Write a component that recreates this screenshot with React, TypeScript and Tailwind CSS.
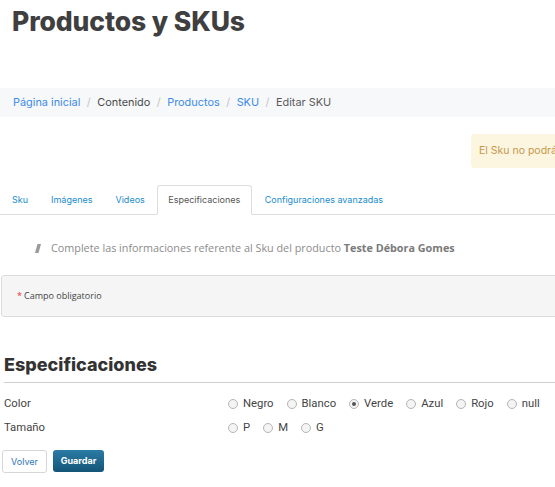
import React from "react";

const colors = ["Negro", "Blanco", "Verde", "Azul", "Rojo", "null"];
const sizes = ["P", "M", "G"];

function Radio({ label, checked }: { label: string; checked?: boolean }) {
    return (
        <label className="mr-[13px] flex items-center gap-[5px]">
            <span className="flex h-[10px] w-[10px] items-center justify-center rounded-full border border-[#b5b5b5] bg-[#f4f4f4]">
                {checked && <span className="h-[4px] w-[4px] rounded-full bg-[#555]" />}
            </span>
            <span>{label}</span>
        </label>
    );
}

export default function App() {
    return (
        <div className="relative h-[487px] w-[555px] overflow-hidden bg-white font-['Open_Sans',sans-serif] text-[#444]">
            {/* Title */}
            <h1 className="pl-[12px] pt-[5px] font-['Inter',sans-serif] text-[26.5px] leading-[32px] font-extrabold tracking-[-0.1px] text-[#3f3f40]">
                Productos y SKUs
            </h1>

            {/* Breadcrumb */}
            <div className="mt-[51px] flex h-[29px] items-center bg-[#f7f8fa] px-[13px] font-['Inter',sans-serif] text-[10.9px] text-[#4a4a4a]">
                <a className="text-[#3b8be6]">Página inicial</a>
                <span className="mx-[6.5px] text-[#c4c4c4]">/</span>
                <span>Contenido</span>
                <span className="mx-[6.5px] text-[#c4c4c4]">/</span>
                <a className="text-[#3b8be6]">Productos</a>
                <span className="mx-[6.5px] text-[#c4c4c4]">/</span>
                <a className="text-[#3b8be6]">SKU</a>
                <span className="mx-[6.5px] text-[#c4c4c4]">/</span>
                <span className="text-[#5a5a5a]">Editar SKU</span>
            </div>

            {/* Alert */}
            <div className="mt-[17px] flex">
                <div className="ml-[471px] flex h-[34px] w-[240px] shrink-0 items-center whitespace-nowrap rounded-[4px] bg-[#fcf5e0] pl-[8px] font-['Inter',sans-serif] text-[10.5px] text-[#c4994c]">
                    El Sku no podrá ser modificado
                </div>
            </div>

            {/* Tabs */}
            <div className="mt-[17px] flex h-[30px] items-end border-b border-[#ddd] font-['Inter',sans-serif] text-[9px] text-[#1a8dcd]">
                <a className="flex h-[29px] items-center px-[12px]">Sku</a>
                <a className="flex h-[29px] items-center px-[11px]">Imágenes</a>
                <a className="flex h-[29px] items-center px-[12px]">Videos</a>
                <a className="-mb-px flex h-[30px] w-[95px] items-center justify-center rounded-t-[3px] border border-b-white border-[#ddd] bg-white text-[#555]">
                    Especificaciones
                </a>
                <a className="flex h-[29px] items-center px-[13px]">Configuraciones avanzadas</a>
            </div>

            {/* Info */}
            <div className="mt-[25px] flex items-center pl-[35px] text-[10.8px] text-[#8c8c8c]">
                <svg width="7" height="9" viewBox="0 0 7 9" className="mr-[9px]">
                    <polygon points="2.5,0 6,0 3.5,9 0,9" fill="#9a9a9a" />
                </svg>
                <span>
                    Complete las informaciones referente al Sku del producto{" "}
                    <b className="font-bold text-[#7a7a7a]">Teste Débora Gomes</b>
                </span>
            </div>

            {/* Required box */}
            <div className="ml-[1px] mt-[19px] flex h-[42px] w-[600px] items-center rounded-[3px] border border-[#dcdcdc] bg-[#f5f5f5] pl-[15px] text-[9px] text-[#444]">
                <span className="mr-[2px] text-[#e33]">*</span>Campo obligatorio
            </div>

            {/* Specs */}
            <div className="ml-[4px] mt-[37px]">
                <h2 className="border-b border-[#cfcfcf] pb-[6px] font-['Inter',sans-serif] text-[18px] leading-[22px] font-extrabold text-[#333]">
                    Especificaciones
                </h2>
                <div className="mt-[9px] font-['Roboto',sans-serif] text-[11.3px] text-[#444]">
                    <div className="flex h-[24px] items-center">
                        <span className="w-[224px]">Color</span>
                        <div className="flex items-center">
                            {colors.map((c) => (
                                <Radio key={c} label={c} checked={c === "Verde"} />
                            ))}
                        </div>
                    </div>
                    <div className="flex h-[24px] items-center">
                        <span className="w-[224px]">Tamaño</span>
                        <div className="flex items-center">
                            {sizes.map((s) => (
                                <Radio key={s} label={s} />
                            ))}
                        </div>
                    </div>
                </div>
                <div className="-ml-[2px] mt-[10px] flex gap-[6px] font-['Inter',sans-serif] text-[9px]">
                    <button className="h-[23px] w-[45px] rounded-[3px] border border-[#d6d6d6] bg-white text-[#2e74b8]">
                        Volver
                    </button>
                    <button className="h-[22px] w-[51px] rounded-[3px] bg-gradient-to-b from-[#2a7ba6] to-[#155577] font-bold text-white">
                        Guardar
                    </button>
                </div>
            </div>
        </div>
    );
}
